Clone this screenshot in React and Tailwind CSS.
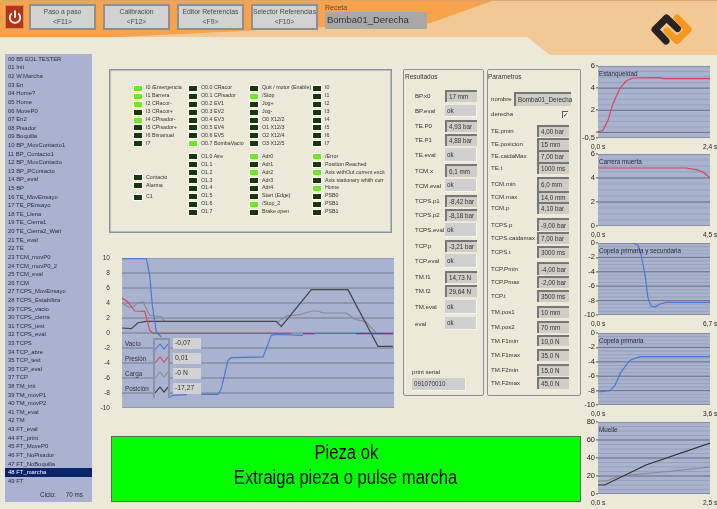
import { Power } from "lucide-react";

const steps = ["00 B5 EOL TESTER","01 Init","02 W.Marcha","03 En","04 Home?","05 Home","06 MoveP0","07 En2","08 Pisador","09 Boquilla","10 BP_MovContacto1","11 BP_Contacto1","12 BP_MovContacto","13 BP_PContacto","14 BP_eval","15 BP","16 TE_MovEnsayo","17 TE_PEnsayo","18 TE_Llena","19 TE_Cierra1","20 TE_Cierra2_Wait","21 TE_eval","22 TE","23 TCM_movP0","24 TCM_movP0_2","25 TCM_eval","26 TCM","27 TCPS_MovEnsayo","28 TCPS_Estabiliza","29 TCPS_vacio","30 TCPS_cierra","31 TCPS_test","32 TCPS_eval","33 TCPS","34 TCP_abre","35 TCP_test","36 TCP_eval","37 TCP","38 TM_init","39 TM_movP1","40 TM_movP2","41 TM_eval","42 TM","43 FT_eval","44 FT_print","45 FT_MoveP0","46 FT_NoPisador","47 FT_NoBoquilla","48 FT_marcha","49 FT"];

const ioColumns = [
  { width: "w-[55px]", top: [["I0 /Emergencia",1],["I1 Barrera",1],["I2 CRacor-",1],["I3 CRacor+",0],["I4 CPisador-",1],["I5 CPisador+",0],["I6 Bimanual",0],["I7",0]] },
  { width: "w-[61px]", top: [["O0.0 CRacor",0],["O0.1 CPisador",0],["O0.2 EV1",0],["O0.3 EV2",0],["O0.4 EV3",0],["O0.5 EV4",0],["O0.6 EV5",0],["O0.7 BombaVacio",1]],
    bottom: [["O1.0 Aire",0],["O1.1",0],["O1.2",0],["O1.3",0],["O1.4",0],["O1.5",0],["O1.6",0],["O1.7",0]] },
  { width: "w-[63px]", top: [["Quit / motor (Enable)",0],["/Stop",1],["Jog+",0],["Jog-",0],["O0 X12/2",0],["O1 X12/3",0],["O2 X12/4",0],["O3 X12/5",0]],
    bottom: [["Adr0",1],["Adr1",0],["Adr2",1],["Adr3",0],["Adr4",0],["Start (Edge)",0],["/Stop_2",1],["Brake open",0]] },
  { width: "w-[70px]", top: [["I0",0],["I1",0],["I2",0],["I3",0],["I4",0],["I5",0],["I6",0],["I7",0]],
    bottom: [["/Error",1],["Position Reached",0],["Axis withOut current excit",1],["Axis stationary whith curr",0],["Home",1],["PSB0",0],["PSB1",0],["PSB1",0]] },
];

const results = [
  ["BP.x0","17 mm","h-3 mt-0"],["BP.eval","ok","h-3 mt-[3px]",1],["TE.P0","4,93 bar","h-3 mt-[3px]"],["TE.P1","4,88 bar","h-3 mt-[2px]"],
  ["TE.eval","ok","h-[14px] mt-[2px]",1],["TCM.x","6,1 mm","h-[13px] mt-[2px]"],["TCM.eval","ok","h-[13px] mt-[2px]",1],["TCPS.p1","-8,42 bar","h-3 mt-[3px]"],
  ["TCPS.p2","-8,18 bar","h-3 mt-[2px]"],["TCPS.eval","ok","h-[14px] mt-[2px]",1],["TCP.p","-3,21 bar","h-3 mt-[3px]"],["TCP.eval","ok","h-[14px] mt-[2px]",1],
  ["TM.f1","14,73 N","h-3 mt-[3px]"],["TM.f2","29,64 N","h-3 mt-[2px]"],["TM.eval","ok","h-[14px] mt-[3px]",1],["eval","ok","h-[13px] mt-[3px]",1],
];

const params = [
  ["TE.pmin","4,00 bar","h-3 mt-0"],["TE.posicion","15 mm","h-3 mt-px"],["TE.caidaMax","7,00 bar","h-3 mt-0"],["TE.t","1000 ms","h-3 mt-0"],
  ["TCM.min","6,0 mm","h-[14px] mt-[3px]"],["TCM.max","14,0 mm","h-[11px] mt-0"],["TCM.p","4,10 bar","h-3 mt-0"],["TCPS.p","-9,00 bar","h-[13px] mt-1"],
  ["TCPS.caidamax","7,00 bar","h-3 mt-px"],["TCPS.t","3000 ms","h-3 mt-[2px]"],["TCP.Pmin","-4,00 bar","h-[13px] mt-1"],["TCP.Pmax","-2,00 bar","h-3 mt-px"],
  ["TCP.t","3500 ms","h-3 mt-[2px]"],["TM.pos1","10 mm","h-3 mt-1"],["TM.pos2","70 mm","h-3 mt-[3px]"],["TM.F1min","10,0 N","h-[11px] mt-[2px]"],
  ["TM.F1max","35,0 N","h-3 mt-[3px]"],["TM.F2min","15,0 N","h-3 mt-[3px]"],["TM.F2max","45,0 N","h-3 mt-px"],
];

const legend = [
  ["Vacío","-0,07","#4a78d8"],["Presión","0,01","#e0405c"],["Carga","-0 N","#8a8a8a"],["Posición","-17,27","#333333"],
];

const miniCharts = [
  { title: "Estanqueidad", min: -0.5, max: 6, ticks: [[6,"6"],[4,"4"],[2,"2"],[0,""],[-0.5,"-0,5"]], step: 0.5, end: "2,4 s", gap: "mt-0",
    lines: [["#e0405c","0,66 5,64.3 10,54.3 15,37.7 21.7,22.7 28,15 35,12 63,11.7 65,12.7 112,12.7"]] },
  { title: "Carrera muerta", min: 0, max: 6, ticks: [[6,"6"],[4,"4"],[2,"2"],[0,"0"]], step: 0.5, end: "4,5 s", gap: "mt-0",
    lines: [["#e0405c","0,14 88,14 98,15.7 105,18 112,24"]] },
  { title: "Copela primaria y secundaria", min: -10, max: 0, ticks: [[0,"0"],[-2,"-2"],[-4,"-4"],[-6,"-6"],[-8,"-8"],[-10,"-10"]], step: 0.5, end: "6,7 s", gap: "mt-px",
    lines: [["#4a78d8","35,0 40,2.3 43,11.7 47,31.7 50,55 53,63 57,64 62,61 68,59.3 112,59.3"]] },
  { title: "Copela primaria", min: -10, max: 0, ticks: [[0,"0"],[-2,"-2"],[-4,"-4"],[-6,"-6"],[-8,"-8"],[-10,"-10"]], step: 0.5, end: "3,6 s", gap: "mt-[2px]",
    lines: [["#4a78d8","0,59 12,57.7 17,52.3 23,39 32,27.3 42,23.7 112,23.7"]] },
  { title: "Muelle", min: 0, max: 80, ticks: [[80,"80"],[60,"60"],[40,"40"],[20,"20"],[0,"0"]], step: 5, end: "2,5 s", gap: "mt-px",
    lines: [["#8a8a8a","0,59 8,59 22,54 42,52 75,49 112,45"],["#333333","0,63 6.7,63 48,43 112,21"]] },
];

function toLocal(points) {
  // coords read off the zoomed reference, 3x with plot origin at 67,38
  return points.map(([x, y]) => `${((x - 67) / 3).toFixed(1)},${((y - 38) / 3).toFixed(1)}`).join(" ");
}

const mainLines = [
  ["#8a8a8a", [[67,172],[85,185],[100,185],[115,172],[130,170],[150,210],[185,214],[195,228]]],
  ["#8a8a8a", [[530,232],[560,212],[600,208],[635,197],[655,197],[670,203],[740,203],[765,222],[800,230],[828,262]]],
  ["#444444", [[67,248],[95,250],[115,232],[140,228],[530,228],[545,243],[560,225],[635,133],[745,133],[835,303],[880,303]]],
  ["#4a78d8", [[67,40],[140,40],[150,90],[158,180],[170,260],[185,275]]],
  ["#4a78d8", [[210,455],[220,450],[262,448]]],
  ["#4a78d8", [[305,447],[355,447],[365,430],[385,345],[395,337],[490,335],[500,310],[515,270],[530,267],[610,270]]],
  ["#4a78d8", [[645,264],[770,264],[880,265]]],
  ["#e0405c", [[67,158],[85,170],[105,197],[135,198],[150,255],[160,264],[575,264]]],
  ["#8a2a90", [[610,265],[645,265]]],
  ["#8a2a90", [[770,265],[880,265]]],
];

function Led({ on }) {
  return <span className={`w-[10px] h-[7px] shrink-0 border-[0.5px] border-white ${on ? "bg-[#66ee1e]" : "bg-[#17380b]"}`} />;
}

function IoRow({ label, on }) {
  return (
    <div className="flex items-center h-[7.9px] gap-[3px] text-[5.3px] text-[#333333] whitespace-nowrap">
      <Led on={on} />
      <span>{label}</span>
    </div>
  );
}

function ValueBox({ value, raised, className }) {
  return (
    <div className={`flex items-center pl-[2px] text-[6.3px] text-[#333333] whitespace-nowrap ${raised ? "bg-[#cfcfcf] border-r border-b border-[#f6f5ee]" : "bg-[#cfcdc6] border-t-2 border-l-2 border-[#777777]"} ${className}`}>
      {value}
    </div>
  );
}

function Row({ label, value, cls, raised, boxWidth }) {
  return (
    <div className={`flex items-center justify-between text-[6.1px] text-[#333333] whitespace-nowrap ${cls}`}>
      <span>{label}</span>
      <ValueBox value={value} raised={raised} className={`h-full ${boxWidth}`} />
    </div>
  );
}

function MiniChart({ chart }) {
  const span = chart.max - chart.min;
  const toY = (v) => ((chart.max - v) / span) * 72;
  const minor = [];
  for (let v = chart.min; v <= chart.max; v += chart.step) minor.push(v);
  return (
    <div className={`flex flex-col ${chart.gap}`}>
      <div className="flex">
        <div className="relative w-[17px] h-[72px] text-[7.5px] text-[#222222]">
          {chart.ticks.map(([v, t]) => (
            <div key={v} className="absolute right-0 flex items-center gap-px -translate-y-1/2 whitespace-nowrap" style={{ top: `${(toY(v) / 72) * 100}%` }}>
              <span>{t}</span>
              <span className="w-[2px] h-px bg-[#555555]" />
            </div>
          ))}
        </div>
        <div className="relative w-[112px] h-[72px] bg-[#a8b3cf]">
          <svg width="112" height="72" className="block">
            {minor.map((v) => <line key={v} x1="0" x2="112" y1={toY(v)} y2={toY(v)} stroke="#98a1b8" strokeWidth="1" />)}
            {chart.ticks.map(([v]) => <line key={v} x1="0" x2="112" y1={toY(v)} y2={toY(v)} stroke="#6f7488" strokeWidth="1" />)}
            {chart.lines.map(([c, p]) => <polyline key={p} points={p} fill="none" stroke={c} strokeWidth="1.2" />)}
          </svg>
          <span className="absolute left-[1px] top-[3px] text-[6.3px] text-[#2c2c3a] whitespace-nowrap">{chart.title}</span>
        </div>
      </div>
      <div className="flex justify-between ml-[10px] w-[126px] h-[16px] text-[6.6px] text-[#222222] whitespace-nowrap">
        <span className="w-[14px] mt-[4px] text-center">0,0 s</span>
        <span className="w-[14px] mt-[4px] text-center">{chart.end}</span>
      </div>
    </div>
  );
}

function MainChart() {
  const labels = ["10","8","6","4","2","0","-2","-4","-6","-8","-10"];
  return (
    <div className="flex mt-[25px]">
      <div className="flex flex-col justify-between w-[10px] h-[150px] mr-[12px] text-[6.6px] text-[#333333] text-right">
        {labels.map((l) => <div key={l} className="h-0 flex items-center justify-end">{l}</div>)}
      </div>
      <div className="relative w-[272px] h-[150px] bg-[#a8b3cf]">
        <svg width="272" height="150" className="block">
          {labels.map((l, i) => <line key={l} x1="0" x2="272" y1={i * 15} y2={i * 15} stroke={i === 0 ? "#8a8a8a" : "#777c90"} strokeWidth="1" />)}
          {mainLines.map(([c, p], i) => <polyline key={i} points={toLocal(p)} fill="none" stroke={c} strokeWidth="1.2" />)}
        </svg>
        <div className="absolute left-[3px] top-[80px] flex flex-col">
          {legend.map(([name, value, color], i) => (
            <div key={name} className="flex items-start h-[15px] text-[6.3px] text-[#333333]">
              <span className="w-[28px] h-[11px] flex items-center">{name}</span>
              <svg width="17" height="15" className={`bg-[#a8b3cf] border-x-2 border-[#8c93a8] shrink-0 ${i === 0 ? "border-t-2" : ""}`}>
                <polyline points="0,10 5,4 9,9 13,4" fill="none" stroke={color} strokeWidth="1.1" />
              </svg>
              <span className="ml-[3px] w-[28px] h-[11px] flex items-center pl-[2px] bg-[#d2d2d2] text-[6.8px]">{value}</span>
            </div>
          ))}
        </div>
      </div>
    </div>
  );
}

function HeaderButton({ title, keyName }) {
  return (
    <button className="w-[67px] h-[26px] flex flex-col items-center justify-center bg-[#d2d2d2] border-2 border-[#8f8f8f] text-[6.8px] leading-[10px] text-[#4a4a4a] whitespace-nowrap">
      <span>{title}</span>
      <span>{keyName}</span>
    </button>
  );
}

function Header() {
  return (
    <div className="relative h-[55px] bg-[#f2c995] [clip-path:polygon(0_0,100%_0,100%_100%,550px_100%,527px_37px,0_37px)]">
      <div className="absolute inset-0 bg-[#f8a349] [clip-path:polygon(0_0,495px_0,430px_23px,300px_28px,120px_37px,0_37px)]" />
      <div className="absolute inset-x-0 top-0 h-px bg-[#d9a56a]" />
      <div className="relative flex items-start pl-[5px] pt-[4px]">
        <div className="w-[19px] h-[24px] mt-px flex items-center justify-center bg-[#b8321a] border border-[#c79060]">
          <Power size={14} color="white" strokeWidth={3.2} />
        </div>
        <div className="flex gap-[7px] ml-[5px]">
          <HeaderButton title="Paso a paso" keyName="<F11>" />
          <HeaderButton title="Calibración" keyName="<F12>" />
          <HeaderButton title="Editor Referencias" keyName="<F9>" />
          <HeaderButton title="Selector Referencias" keyName="<F10>" />
        </div>
        <div className="flex flex-col ml-[7px] -mt-[1px]">
          <span className="text-[7px] leading-[9px] text-[#5a4630]">Receta</span>
          <div className="w-[102px] h-[17px] flex items-center pl-[2px] bg-[#a8a8a8] text-[9.5px] text-[#333333]">Bomba01_Derecha</div>
        </div>
        <svg width="44" height="34" viewBox="0 0 44 34" className="ml-[223px] mt-[9px]">
          <polyline points="16,28 5,16.5 16.5,5 27.5,15.5" fill="none" stroke="#262322" strokeWidth="7" strokeLinejoin="round" strokeLinecap="round" />
          <polyline points="27,5 38,16.5 27,27.5 17,18" fill="none" stroke="#f7981d" strokeWidth="7" strokeLinejoin="round" strokeLinecap="round" />
        </svg>
      </div>
    </div>
  );
}

function Sidebar() {
  return (
    <div className="flex flex-col w-[87px] h-[448px] pt-px bg-[#a9b3cf] text-[5.9px] text-[#2c2c3a]">
      {steps.map((s) => (
        <div key={s} className={`h-[8.62px] shrink-0 flex items-center pl-[3px] whitespace-nowrap ${s === "48 FT_marcha" ? "bg-[#0a246a] text-white" : ""}`}>{s}</div>
      ))}
      <div className="flex justify-end gap-[10px] mt-[5px] pr-[9px] text-[6.3px]">
        <span>Ciclo:</span>
        <span>70 ms</span>
      </div>
    </div>
  );
}

function IoPanel() {
  return (
    <div className="flex ml-[9px] w-[283px] h-[164px] pt-[14.5px] pl-[23px] border border-[#8a90a8] shadow-[inset_0_0_0_0.5px_#8a90a8]">
      {ioColumns.map((col, i) => (
        <div key={i} className={`flex flex-col ${col.width}`}>
          {col.top.map(([l, on], j) => <IoRow key={j} label={l} on={on} />)}
          {col.bottom ? (
            <div className="flex flex-col mt-[5.3px]">
              {col.bottom.map(([l, on], j) => <IoRow key={j} label={l} on={on} />)}
            </div>
          ) : (
            <div className="flex flex-col mt-[26px]">
              <IoRow label="Contacto" on={0} />
              <IoRow label="Alarma" on={0} />
              <div className="mt-1"><IoRow label="C1" on={0} /></div>
            </div>
          )}
        </div>
      ))}
    </div>
  );
}

function Results() {
  return (
    <div className="flex flex-col ml-[9px] w-[81px] h-[327px] pl-[1px] pr-[6px] border border-[#8b8f96] rounded-[2px]">
      <div className="text-[6.5px] text-[#333333] mt-[2px] h-[18px]">Resultados</div>
      <div className="flex flex-col ml-[10px]">
        {results.map(([l, v, c, r]) => <Row key={l} label={l} value={v} cls={c} raised={r} boxWidth="w-[32px]" />)}
      </div>
      <div className="mt-[38px] ml-[7px] text-[6.1px] leading-[8px] text-[#333333]">print serial</div>
      <ValueBox value="091070010" raised className="ml-[7px] mt-[2px] w-[54px] h-[13px]" />
    </div>
  );
}

function Parametros() {
  return (
    <div className="flex flex-col ml-[3px] w-[94px] h-[327px] border border-[#8b8f96] rounded-[2px]">
      <div className="text-[6.5px] text-[#333333] mt-[2px] h-[20px]">Parametros</div>
      <div className="flex items-center justify-between h-[14px] pl-[3px] pr-[9px] text-[6.1px] text-[#333333]">
        <span>nombre</span>
        <ValueBox value="Bomba01_Derecha" className="w-[57px] h-full" />
      </div>
      <div className="flex items-center justify-between h-[14px] mt-px pl-[3px] pr-[12px] text-[6.1px] text-[#333333]">
        <span>derecha</span>
        <span className="w-[6px] h-[7px] bg-[#f2f0e6] border-t border-l border-[#555555] text-[6px] leading-[6px] text-black">✓</span>
      </div>
      <div className="flex flex-col mt-[4px] pl-[3px] pr-[11px]">
        {params.map(([l, v, c]) => <Row key={l} label={l} value={v} cls={c} boxWidth="w-[32px]" />)}
      </div>
    </div>
  );
}

export default function App() {
  return (
    <div className="w-[717px] h-[509px] overflow-hidden bg-[#ece9d8] font-['Liberation_Sans',Arial,sans-serif] blur-[0.3px]">
      <Header />
      <div className="flex -mt-px pl-[5px]">
        <Sidebar />
        <div className="flex flex-col ml-[8px] w-[481px] pt-[15px]">
          <div className="flex">
            <div className="flex flex-col w-[294px]">
              <IoPanel />
              <MainChart />
            </div>
            <Results />
            <Parametros />
          </div>
          <div className="flex flex-col items-center pt-[3px] ml-[11px] mt-[28px] w-[470px] h-[66px] bg-[#00ff00] border border-[#5a6a5a] text-[20px] leading-[25px] text-black">
            <span className="scale-x-[0.83] whitespace-nowrap">Pieza ok</span>
            <span className="scale-x-[0.83] whitespace-nowrap">Extraiga pieza o pulse marcha</span>
          </div>
        </div>
        <div className="flex flex-col pt-[12px] w-[136px]">
          {miniCharts.map((c) => <MiniChart key={c.title} chart={c} />)}
        </div>
      </div>
    </div>
  );
}
